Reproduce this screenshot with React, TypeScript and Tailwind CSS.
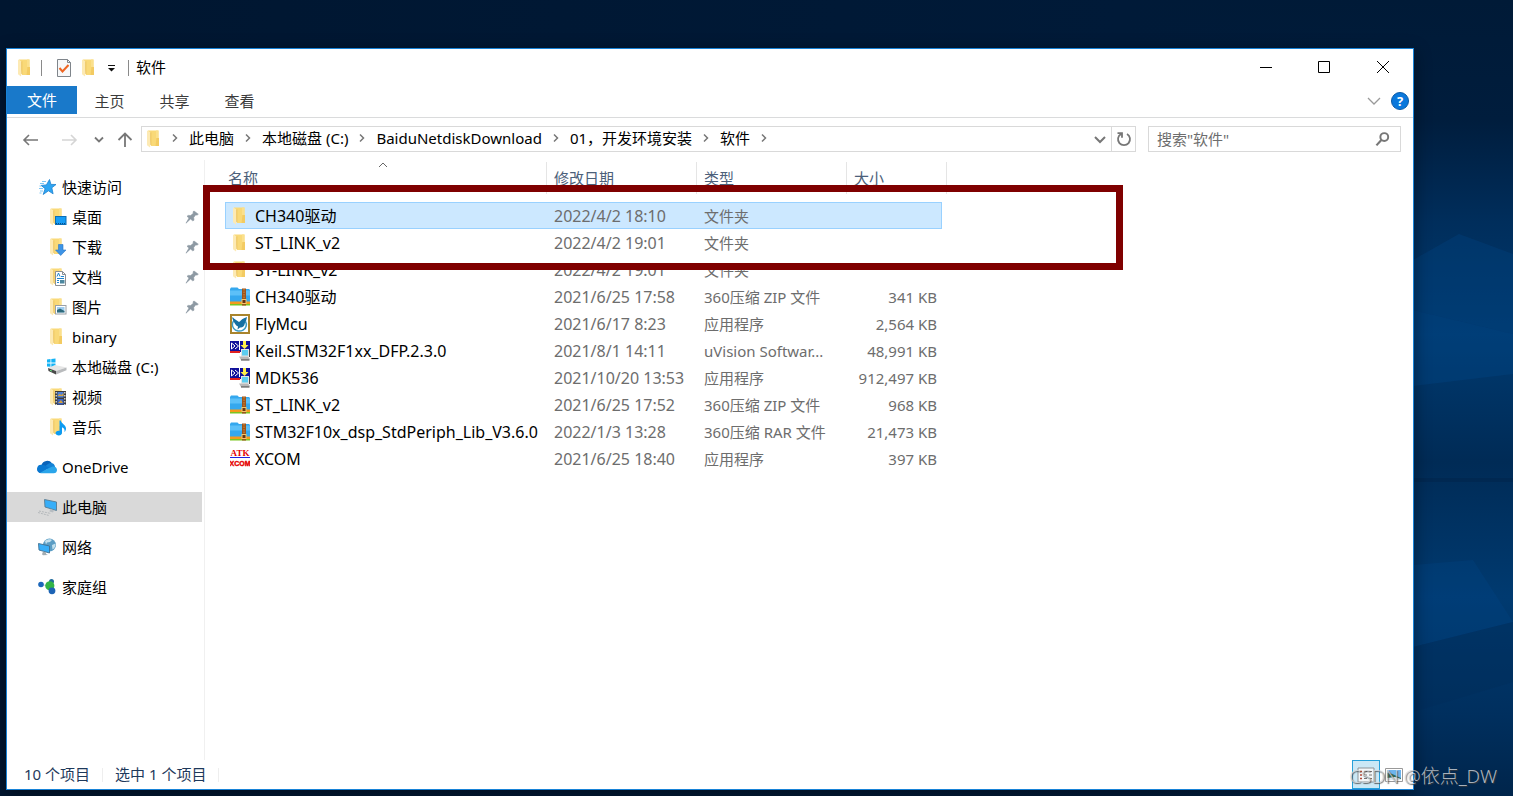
import { Fragment } from "react";
import type { ReactNode } from "react";
import clsx from "clsx";

const Folder = ({ children }: { children?: ReactNode }) => (
  <svg viewBox="0 0 20 20" className="size-5 shrink-0">
    <path d="M4 1.5h10.500V17H7z" fill="#f9d978" />
    <path d="M12 1.500h2.500V9H12z" fill="#fbe08c" />
    <path d="M12.500 9H15v8h-3.500z" fill="#f3cb62" />
    <path d="M3 1.500l3.500 1.800v12.200L6 18.500 3 16.300z" fill="#fdeab4" />
    <path d="M6.800 3.300V16" stroke="#e5b94f" strokeWidth=".7" />
    {children}
  </svg>
);

const DesktopIcon = () => (
  <Folder>
    <rect x="8.500" y="9.500" width="10.500" height="8" fill="#159cf5" stroke="#0b6db5" />
    <path d="M9 16.500h9.500" stroke="#074f87" strokeDasharray="1 1" />
  </Folder>
);

const DownloadIcon = () => (
  <Folder>
    <path d="M11.500 7.500h4.500v5.500h3L13.700 18.500 8.500 13h3z" fill="#3d94e6" stroke="#2a76c4" strokeWidth=".6" />
  </Folder>
);

const DocumentIcon = () => (
  <Folder>
    <path d="M8.500 4.500h7l3 3V18.500h-10z" fill="#fff" stroke="#8a8f94" />
    <path d="M15.500 4.500v3h3" fill="none" stroke="#8a8f94" />
    <path d="M10 9.500l1.500-3.500 1.500 3.500M14 9.500h3M10 11.500h7M10 13.500h2M10 15.500h2" fill="none" stroke="#1f86cf" />
    <rect x="13" y="13" width="4.500" height="3.500" fill="#4d88a0" />
  </Folder>
);

const PictureIcon = () => (
  <Folder>
    <rect x="8.500" y="8.500" width="10.500" height="8.500" fill="#fff" stroke="#9aa0a6" />
    <rect x="10" y="10" width="7.500" height="5.500" fill="#9fcdf0" />
    <path d="M10 13l3-1.500 4.500 2.500v1.500H10z" fill="#2e6a7c" />
  </Folder>
);

const VideoIcon = () => (
  <Folder>
    <rect x="8" y="4" width="11" height="14" fill="#3c3c3c" />
    <path d="M9.200 5v13M17.800 5v13" stroke="#eee" strokeWidth="1.200" strokeDasharray="1.500 1.500" />
    <rect x="10.500" y="5" width="6" height="5.500" fill="#4e7fd6" />
    <rect x="10.500" y="12" width="6" height="5.500" fill="#3a63c4" />
    <path d="M10.500 9l2-2 2 1 2-2v3h-6zM11 16l3-3 2 3z" fill="#d5a13c" />
  </Folder>
);

const MusicIcon = () => (
  <Folder>
    <path d="M12.500 3.500h1.300c.7 3.300 5.200 4.500 5.200 8 0 1.700-.7 2.800-1.500 3.500.6-2.700-.8-4-2.500-4.700v5.300c0 1.800-1.500 2.900-3.200 2.900s-3.300-.9-3.300-2.400 1.800-2.600 4-2.200z" fill="#0c9bf2" />
  </Folder>
);

const StarIcon = () => (
  <svg viewBox="0 0 20 20" className="size-5 shrink-0">
    <path d="M12.500 2.500l1.400 4.900 5.100.1-4.200 3.300 1.300 6-4.700-3-5.200 3.700 1.900-5.800-3.900-3.300 5.200-.5z" fill="#2ea5f2" stroke="#1b80cf" strokeWidth=".8" />
    <path d="M5 4.500h4M3 6.500h4M2.500 9h2M2 11.500h4M3 14h3M2.500 16h2" stroke="#6fc0f3" strokeWidth=".9" />
  </svg>
);

const DriveIcon = () => (
  <svg viewBox="0 0 20 20" className="size-5 shrink-0">
    <path d="M0 2.500l3.500-.4V5.600H0zM4.300 2L8.500 1.500v4.100H4.300zM0 6.400h3.500v3.400L0 9.400zM4.300 6.400h4.200v4L4.300 9.900z" fill="#14b3f5" />
    <path d="M1 11l7-3 11.500 2.500L9 14z" fill="#e6e6e6" />
    <path d="M1 11l8 3v3.500L1.500 14z" fill="#4a4a4a" />
    <path d="M9 14l10.500-3.500v2.700L9 17.500z" fill="#b9bbbd" />
    <path d="M3 13.300l2 .8" stroke="#5fe07c" />
  </svg>
);

const CloudIcon = () => (
  <svg viewBox="0 0 20 20" className="size-5 shrink-0">
    <path d="M4.500 8A6 6 0 0115 6.200L10 12l-6 4.300A4.200 4.200 0 014.500 8z" fill="#0a63b9" />
    <path d="M15 6.200a5 5 0 00-4 .7L7 10l9 5 2-5.500c-.5-2-1.500-3-3-3.300z" fill="#1482d6" />
    <path d="M4.500 7.800c2-.5 3.500.5 5 1.500l3 1.700-9.500 5A4.200 4.200 0 014.500 7.800z" fill="#0a78d1" />
    <path d="M3 15.800l8-4.300 4-1.700c3-.8 5 1.200 5 3.200s-1.400 3.300-3.300 3.300H4.500z" fill="#2aa5ea" />
  </svg>
);

const ComputerIcon = () => (
  <svg viewBox="0 0 20 20" className="size-5 shrink-0">
    <path d="M7.500 2.500l12 2.500v8.500l-11.500-3.500z" fill="#37aef8" stroke="#597a90" strokeWidth=".9" />
    <path d="M13 12l4 1.200-1 2.300-3.500-1z" fill="#b6bcc1" />
    <path d="M1 15.500l11 3M2 14l12 2.500" stroke="#b4b8bb" strokeDasharray="2 1" />
  </svg>
);

const NetworkIcon = () => (
  <svg viewBox="0 0 20 20" className="size-5 shrink-0">
    <circle cx="12.500" cy="8" r="6.500" fill="#5b9dc4" />
    <path d="M8 4c2-2 6-2.500 7-1l-2 2-3 .5-1 2zM15 8l3.500-1.500c.5 2-1 5-3 6z" fill="#c2e0ee" />
    <path d="M1.500 6.500l11 2.500v7L2 13z" fill="#37aef8" stroke="#3f6f91" strokeWidth=".9" />
    <path d="M6 14.500l3 .8v1.700l2 1-5 .3-1-1z" fill="#a3adb3" />
  </svg>
);

const HomegroupIcon = () => (
  <svg viewBox="0 0 20 20" className="size-5 shrink-0">
    <path d="M4 7.500l8 1.500 2-6M12 9l3 6" stroke="#c5cdd3" fill="none" />
    <circle cx="4" cy="7.500" r="2.800" fill="#1b66ba" />
    <circle cx="14.500" cy="4.500" r="2.500" fill="#1f6b9c" />
    <circle cx="12.800" cy="8.800" r="4.600" fill="#33b446" />
    <circle cx="15" cy="13.800" r="3.400" fill="#1c63b5" />
  </svg>
);

const PinIcon = () => (
  <svg viewBox="0 0 14 14" className="size-3.5 shrink-0">
    <path d="M9 1l4.300 3.200-1.200.9L10.500 5 8.700 7.500l.3 2.700-1.300.6L5.500 9 1 13.200 4 8 2 6.300l1.200-.9 2.500.1L8.300 3.300 8 1.800z" fill="#8d99a3" stroke="#8d99a3" strokeWidth=".6" />
  </svg>
);

const ArchiveIcon = () => (
  <svg viewBox="0 0 20 20" className="size-5 shrink-0">
    <path d="M0 2L1 .500h6.500L9 2h10l1 1v12H0z" fill="#35a8ee" />
    <path d="M0 3.500h20v5H0z" fill="#5cc0f8" />
    <rect y="14.500" width="20" height="2.500" fill="#f59a1c" />
    <rect y="17" width="20" height="1.500" fill="#7cc520" />
    <rect x="12" y="1.500" width="4" height="17" fill="#9b551c" />
    <path d="M14 2v10" stroke="#d98b3a" strokeDasharray="1.500 1" />
    <rect x="12" y="12.500" width="4" height="4" fill="#6b3410" stroke="#f3c76a" />
  </svg>
);

const FlyMcuIcon = () => (
  <svg viewBox="0 0 20 20" className="size-5 shrink-0">
    <rect x="1" y="1" width="18" height="18" fill="#fff" stroke="#a9842c" strokeWidth="2" />
    <path d="M5 5.500a7 6.500 0 1010.500 2" fill="none" stroke="#3c9ac0" strokeWidth="1.500" />
    <path d="M3 3.500c1.500 2 3.500 2.500 6 4.500 1.500-.5 2.500-3 4.500-3.500L17 3l-.8 3.500-1.400 3c-.3 3-2.800 4.500-4.800 4l-2.500 2 .5-3c-2.500-1-4-4-6-9z" fill="#1670a2" />
  </svg>
);

const KeilIcon = () => (
  <svg viewBox="0 0 20 20" className="size-5 shrink-0">
    <path d="M0 0h20v11H0z" fill="#10109a" />
    <path d="M0 10h10v2H0z" fill="#e12020" />
    <path d="M1.500 2l3.500 3-3.500 3M5 2l3.500 3L5 8M1.500 2v6" fill="none" stroke="#fff" />
    <path d="M9.500 0v9" stroke="#fff" />
    <path d="M13 0h3v4h2.500l-4 4-4-4H13z" fill="#fff04a" />
    <rect x="11.500" y="8.500" width="7" height="6.500" fill="#5bcdf0" stroke="#e3e3e3" />
    <path d="M9 15.500h9l2 2.500-1 1H11z" fill="#b8b8b8" />
    <path d="M11 19h8.500M19.500 9v7" stroke="#444" />
  </svg>
);

const XcomIcon = () => (
  <svg viewBox="0 0 20 20" className="size-5 shrink-0 font-bold" fill="#e60000">
    <text x="10" y="7" fontSize="9" textAnchor="middle" className="font-['Liberation_Serif',serif]">ATK</text>
    <path d="M0 8.500h20" stroke="#2222e0" />
    <text x="10" y="17" fontSize="7" textAnchor="middle" stroke="#e60000" strokeWidth=".4" className="font-['Liberation_Sans',sans-serif]">XCOM</text>
  </svg>
);

const Crumb = () => (
  <svg viewBox="0 0 6 10" className="mb-0.5 h-2.5 w-1.5 shrink-0">
    <path d="M1 1.500L4.500 5 1 8.500" fill="none" stroke="#777" strokeWidth="1.500" />
  </svg>
);

const quickAccess = [
  { label: "桌面", Icon: DesktopIcon, pinned: true },
  { label: "下载", Icon: DownloadIcon, pinned: true },
  { label: "文档", Icon: DocumentIcon, pinned: true },
  { label: "图片", Icon: PictureIcon, pinned: true },
  { label: "binary", Icon: Folder },
  { label: "本地磁盘 (C:)", Icon: DriveIcon },
  { label: "视频", Icon: VideoIcon },
  { label: "音乐", Icon: MusicIcon },
];

const places = [
  { label: "OneDrive", Icon: CloudIcon },
  { label: "此电脑", Icon: ComputerIcon, active: true },
  { label: "网络", Icon: NetworkIcon },
  { label: "家庭组", Icon: HomegroupIcon },
];

const files = [
  { name: "CH340驱动", date: "2022/4/2 18:10", type: "文件夹", size: "", Icon: Folder, selected: true },
  { name: "ST_LINK_v2", date: "2022/4/2 19:01", type: "文件夹", size: "", Icon: Folder },
  { name: "ST-LINK_v2", date: "2022/4/2 19:01", type: "文件夹", size: "", Icon: Folder },
  { name: "CH340驱动", date: "2021/6/25 17:58", type: "360压缩 ZIP 文件", size: "341 KB", Icon: ArchiveIcon },
  { name: "FlyMcu", date: "2021/6/17 8:23", type: "应用程序", size: "2,564 KB", Icon: FlyMcuIcon },
  { name: "Keil.STM32F1xx_DFP.2.3.0", date: "2021/8/1 14:11", type: "uVision Softwar...", size: "48,991 KB", Icon: KeilIcon },
  { name: "MDK536", date: "2021/10/20 13:53", type: "应用程序", size: "912,497 KB", Icon: KeilIcon },
  { name: "ST_LINK_v2", date: "2021/6/25 17:52", type: "360压缩 ZIP 文件", size: "968 KB", Icon: ArchiveIcon },
  { name: "STM32F10x_dsp_StdPeriph_Lib_V3.6.0", date: "2022/1/3 13:28", type: "360压缩 RAR 文件", size: "21,473 KB", Icon: ArchiveIcon },
  { name: "XCOM", date: "2021/6/25 18:40", type: "应用程序", size: "397 KB", Icon: XcomIcon },
];

const crumbs = ["此电脑", "本地磁盘 (C:)", "BaiduNetdiskDownload", "01，开发环境安装", "软件"];

function Wallpaper() {
  return (
    <svg viewBox="0 0 1513 796" preserveAspectRatio="none" className="absolute inset-0 size-full">
      <defs>
        <linearGradient id="sky" x1="0" y1="0" x2="0" y2="1">
          <stop offset="0" stopColor="#001a37" />
          <stop offset=".15" stopColor="#001d3d" />
          <stop offset=".28" stopColor="#002e5c" />
          <stop offset=".42" stopColor="#003a70" />
          <stop offset=".58" stopColor="#002b56" />
          <stop offset=".75" stopColor="#003a70" />
          <stop offset=".9" stopColor="#002f5e" />
          <stop offset="1" stopColor="#00254b" />
        </linearGradient>
        <linearGradient id="dark" x1="0" y1="0" x2="1" y2="0">
          <stop offset="0" stopColor="#001630" />
          <stop offset=".8" stopColor="#001a38" />
          <stop offset="1" stopColor="#001a38" stopOpacity="0" />
        </linearGradient>
      </defs>
      <rect width="1513" height="796" fill="url(#sky)" />
      <path d="M1413 260l46-26 54 20v80l-100-24z" fill="#00407c" opacity=".4" />
      <path d="M1413 310l100 24v40l-100 12z" fill="#00488a" opacity=".3" />
      <path d="M1413 478h100v4h-100z" fill="#00244a" opacity=".5" />
      <path d="M1413 565l60-5 40 62-100 25z" fill="#00488a" opacity=".25" />
      <path d="M1413 647l100-25v60l-100 30z" fill="#002c59" opacity=".4" />
      <rect width="1400" height="796" fill="url(#dark)" />
    </svg>
  );
}

function TitleBar() {
  return (
    <header className="flex h-[37px] items-center pl-2">
      <Folder />
      <span className="ml-1.5 h-4 w-px bg-[#8a8a8a]" />
      <button aria-label="属性" className="ml-[13px]">
        <svg viewBox="0 0 18 20" className="h-5 w-[18px]">
          <path d="M2.500 1.500h10l3 3v14h-13z" fill="#f7f8f9" stroke="#7f858b" />
          <path d="M12.500 1.500v3h3" fill="none" stroke="#7f858b" />
          <path d="M4.500 10l3 3.500 6-6.500" fill="none" stroke="#ee6522" strokeWidth="2" />
        </svg>
      </button>
      <button aria-label="新建文件夹" className="ml-1.5">
        <Folder />
      </button>
      <button aria-label="自定义快速访问工具栏" className="ml-2">
        <svg viewBox="0 0 10 10" className="size-2.5">
          <path d="M1 2.500h7" stroke="#111" />
          <path d="M1 5h7L4.500 8.500z" fill="#111" />
        </svg>
      </button>
      <span className="ml-[11px] h-4 w-px bg-[#8a8a8a]" />
      <h1 className="ml-[7px] grow pb-0.5">软件</h1>
      <button aria-label="最小化" className="flex h-full w-[58px] items-center justify-center">
        <svg viewBox="0 0 12 12" className="size-3">
          <path d="M0 5.500h12" stroke="#000" />
        </svg>
      </button>
      <button aria-label="最大化" className="flex h-full w-[58px] items-center justify-center pb-0.5">
        <svg viewBox="0 0 12 12" className="size-3">
          <path d="M.5.5h11v11H.5z" fill="none" stroke="#000" />
        </svg>
      </button>
      <button aria-label="关闭" className="flex h-full w-[60px] items-center justify-center pb-0.5">
        <svg viewBox="0 0 12 12" className="size-3">
          <path d="M0 0l12 12M12 0L0 12" stroke="#000" />
        </svg>
      </button>
    </header>
  );
}

function Ribbon() {
  return (
    <nav className="flex h-8 border-b border-[#dadbdc] text-[#3b3b3b]">
      <button className="h-7 w-[70px] bg-[#1979ca] text-white">文件</button>
      {["主页", "共享", "查看"].map((tab) => (
        <button key={tab} className="h-[29px] w-[65px]">
          {tab}
        </button>
      ))}
      <button aria-label="展开功能区" className="ml-auto pb-0.5">
        <svg viewBox="0 0 14 8" className="h-2 w-3.5">
          <path d="M1 1l6 6 6-6" fill="none" stroke="#9a9a9a" strokeWidth="1.300" />
        </svg>
      </button>
      <button
        aria-label="帮助"
        className="mr-1 mb-0.5 ml-2.5 size-[18px] self-center rounded-full border border-[#0a5ba8] bg-[#0a78dc] text-[13px] leading-4 font-bold text-white"
      >
        ?
      </button>
    </nav>
  );
}

function AddressBar() {
  return (
    <div className="flex h-[42px] items-center pl-[13px] pr-3">
      <button aria-label="后退">
        <svg viewBox="0 0 20 20" className="size-5">
          <path d="M18 11H4M9 6l-5 5 5 5" fill="none" stroke="#777" strokeWidth="1.600" />
        </svg>
      </button>
      <button aria-label="前进" className="ml-5">
        <svg viewBox="0 0 20 20" className="size-5">
          <path d="M2 11h14M11 6l5 5-5 5" fill="none" stroke="#d5d5d5" strokeWidth="1.600" />
        </svg>
      </button>
      <button aria-label="最近的位置" className="ml-3">
        <svg viewBox="0 0 14 14" className="size-3.5">
          <path d="M3 5.500L7 9.500l4-4" fill="none" stroke="#777" strokeWidth="1.800" />
        </svg>
      </button>
      <button aria-label="上移" className="ml-[9px]">
        <svg viewBox="0 0 20 20" className="size-5">
          <path d="M10 18V4.500M3.500 11L10 4.500l6.500 6.500" fill="none" stroke="#777" strokeWidth="1.800" />
        </svg>
      </button>
      <div className="ml-1.5 flex h-[26px] grow items-center border border-[#d9d9d9] pl-0.5">
        <Folder />
        <span className="ml-2">
          <Crumb />
        </span>
        {crumbs.map((crumb) => (
          <Fragment key={crumb}>
            <button className="mx-[11px] pb-0.5">{crumb}</button>
            <Crumb />
          </Fragment>
        ))}
        <button aria-label="以前的位置" className="mr-1 ml-auto">
          <svg viewBox="0 0 14 14" className="size-3.5">
            <path d="M2 5l5 5 5-5" fill="none" stroke="#777" strokeWidth="2" />
          </svg>
        </button>
        <button aria-label="刷新" className="flex h-full w-6 items-center justify-center border-l border-[#d9d9d9]">
          <svg viewBox="0 0 16 16" className="size-4">
            <path d="M11 3A6 6 0 115 3M1.500 2.200h4.500v4.500" fill="none" stroke="#777" strokeWidth="1.800" />
          </svg>
        </button>
      </div>
      <label className="ml-3 flex h-[26px] w-[253px] items-center border border-[#d9d9d9] pr-2 pl-2">
        <input
          type="search"
          aria-label="搜索"
          placeholder={'搜索"软件"'}
          className="min-w-0 grow outline-none placeholder:text-[#6d6d6d]"
        />
        <svg viewBox="0 0 18 18" className="size-[18px]">
          <circle cx="10.500" cy="7" r="4" fill="none" stroke="#777" strokeWidth="2" />
          <path d="M7.500 10L2.500 15.500" stroke="#777" strokeWidth="2.200" />
        </svg>
      </label>
    </div>
  );
}

function Sidebar() {
  return (
    <nav className="w-[198px] shrink-0 border-r border-[#f0f0f0] pt-3 pr-0.5">
      <a href="#quick" className="flex h-[30px] items-center gap-[5px] pl-[30px]">
        <StarIcon />
        快速访问
      </a>
      {quickAccess.map(({ label, Icon, pinned }) => (
        <a key={label} href="#quick" className="flex h-[30px] items-center gap-[5px] pr-[3px] pl-10">
          <Icon />
          <span className="grow">{label}</span>
          {pinned && <PinIcon />}
        </a>
      ))}
      {places.map(({ label, Icon, active }) => (
        <a
          key={label}
          href="#place"
          className={clsx("mt-2.5 flex h-[30px] items-center gap-[5px] pl-[30px]", active && "bg-[#d9d9d9]")}
        >
          <Icon />
          {label}
        </a>
      ))}
    </nav>
  );
}

function FileTable() {
  const head = "flex h-8 items-center border-r border-[#e5e5e5] pl-[7px] font-normal";
  return (
    <table className="w-[722px] table-fixed border-separate border-spacing-0 text-left text-[#6d6d6d]">
      <colgroup>
        <col className="w-[322px]" />
        <col className="w-[150px]" />
        <col className="w-[150px]" />
        <col className="w-[95px]" />
        <col className="w-[5px]" />
      </colgroup>
      <thead className="text-[#4c607a]">
        <tr className="h-[42px] align-top">
          <th className="relative pt-0.5">
            <div className="flex h-8 items-center border-r border-[#e5e5e5] pl-[3px] font-normal">名称</div>
            <svg viewBox="0 0 10 6" className="absolute top-0.5 left-[153px] h-1.5 w-2.5">
              <path d="M1 5l4-4 4 4" fill="none" stroke="#666" />
            </svg>
          </th>
          <th className="pt-0.5"><div className={head}>修改日期</div></th>
          <th className="pt-0.5"><div className={head}>类型</div></th>
          <th className="pt-0.5"><div className="flex h-8 items-center pl-[7px] font-normal">大小</div></th>
          <th className="pt-0.5"><div className="h-8 border-r border-[#e5e5e5]" /></th>
        </tr>
      </thead>
      <tbody>
        {files.map(({ name, date, type, size, Icon, selected }, i) => {
          const cell = clsx("h-[27px] whitespace-nowrap", selected && "border-y border-[#99d1ff] bg-[#cce8ff]");
          return (
            <tr key={i}>
              <td className={clsx(cell, "text-base leading-5 text-black", selected ? "border-l pl-1" : "pl-[5px]")}>
                <span className="flex items-center gap-[5px]">
                  <Icon />
                  {name}
                </span>
              </td>
              <td className={clsx(cell, "pl-[7px] text-base leading-5")}>{date}</td>
              <td className={clsx(cell, "pl-[7px]")}>{type}</td>
              <td className={clsx(cell, "pr-[5px] text-right", selected && "border-r")}>{size}</td>
              <td />
            </tr>
          );
        })}
      </tbody>
    </table>
  );
}

function StatusBar() {
  return (
    <footer className="flex h-[29px] items-center pl-[17px] text-[#1e395b]">
      <span className="pb-0.5">10 个项目</span>
      <span className="mx-3 h-3.5 w-px bg-[#eeeeee]" />
      <span className="pb-0.5">选中 1 个项目</span>
      <span className="mx-3 h-3.5 w-px bg-[#eeeeee]" />
      <button
        aria-label="详细信息"
        className="ml-auto flex h-[29px] w-7 items-center justify-center border border-[#26a0da] bg-[#cbe8f6]"
      >
        <svg viewBox="0 0 18 16" className="h-4 w-[18px]">
          <path d="M1 1h16v14H1z" fill="#f4f7f9" stroke="#8c9499" />
          <path d="M3 4.500h2M3 8h2M3 11.500h2" stroke="#b04a3a" strokeWidth="1.500" />
          <path d="M7 4.500h3M12 4.500h3M7 8h3M12 8h3M7 11.500h3M12 11.500h3" stroke="#777" />
        </svg>
      </button>
      <button aria-label="大缩略图" className="mr-2.5 ml-[5px]">
        <svg viewBox="0 0 18 14" className="h-3.5 w-[18px]">
          <path d="M.5.5h17v13H.5z" fill="#fff" stroke="#999" />
          <path d="M2 2h14v10H2z" fill="#6db4ee" />
          <path d="M2 5c5 0 9 3 14 5v2H2z" fill="#2e6a5c" />
          <path d="M2 10l8-1 6 2v1H2z" fill="#dfeaf2" />
        </svg>
      </button>
    </footer>
  );
}

export default function App() {
  return (
    <div className="relative flex h-screen overflow-hidden bg-[#001a37] pt-12 pr-[99px] pb-1.5 pl-1.5 font-['Noto_Sans','Noto_Sans_CJK_SC',sans-serif] text-[15px] leading-5 text-black">
      <Wallpaper />
      <div className="relative flex grow flex-col border border-[#1883d7] bg-white shadow-[0_4px_16px_rgba(0,0,0,0.4)]">
        <TitleBar />
        <Ribbon />
        <AddressBar />
        <div className="flex min-h-0 grow">
          <Sidebar />
          <main className="relative min-w-0 grow pl-5">
            <FileTable />
            <div className="pointer-events-none absolute top-[25px] -left-0.5 h-[85px] w-[920px] border-[7px] border-[#7f0000]" />
          </main>
        </div>
        <StatusBar />
      </div>
      <p className="absolute right-4 bottom-2 text-[19px] leading-6 font-light text-[#d5d8db]/80 [text-shadow:1px_1px_1px_rgba(60,60,60,0.8)]">
        CSDN @依点_DW
      </p>
    </div>
  );
}
